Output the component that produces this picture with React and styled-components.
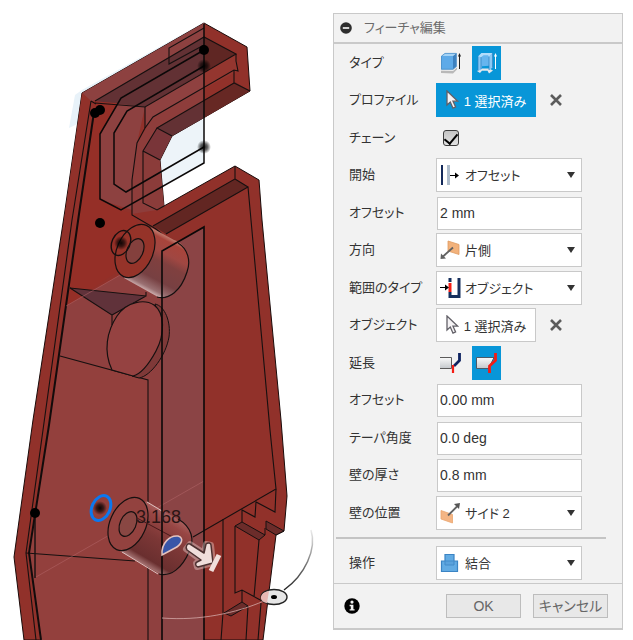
import { useId, useState } from "react";
import styled, { createGlobalStyle } from "styled-components";

export default function App() {
  const [type, setType] = useState("thin");
  const [extend, setExtend] = useState("adjacent");
  const [chain, setChain] = useState(true);

  return (
    <>
      <GlobalStyle />
      <Workspace>
        <Viewport>
          <Model />
        </Viewport>

        <Panel onSubmit={(e) => e.preventDefault()}>
          <PanelHeader>
            <CollapseButton type="button" aria-label="折りたたむ">
              <MinusIcon />
            </CollapseButton>
            <Title>フィーチャ編集</Title>
          </PanelHeader>

          <PanelBody>
            <Rows>
              <Row>
                <Label as="span">タイプ</Label>
                <IconToggle
                  type="button"
                  aria-label="押し出し"
                  $active={type === "solid"}
                  onClick={() => setType("solid")}
                >
                  <SolidIcon />
                </IconToggle>
                <IconToggle
                  type="button"
                  aria-label="薄い押し出し"
                  $active={type === "thin"}
                  onClick={() => setType("thin")}
                >
                  <ThinIcon />
                </IconToggle>
              </Row>
              <SelectionRow label="プロファイル" active />
              <Row>
                <Label htmlFor="chain">チェーン</Label>
                <Checkbox
                  id="chain"
                  type="checkbox"
                  checked={chain}
                  onChange={(e) => setChain(e.target.checked)}
                />
              </Row>
              <SelectRow
                label="開始"
                icon={<StartIcon />}
                options={["オフセット", "プロファイル平面", "オブジェクト"]}
              />
              <InputRow label="オフセット" value="2 mm" />
              <SelectRow
                label="方向"
                icon={<DirectionIcon />}
                options={["片側", "2 つの側面", "対称"]}
              />
              <SelectRow
                label="範囲のタイプ"
                icon={<ExtentIcon />}
                options={["オブジェクト", "距離", "すべて"]}
              />
              <SelectionRow label="オブジェクト" />
              <Row>
                <Label as="span">延長</Label>
                <IconToggle
                  type="button"
                  aria-label="選択した面"
                  $active={extend === "face"}
                  onClick={() => setExtend("face")}
                >
                  <FaceIcon />
                </IconToggle>
                <IconToggle
                  type="button"
                  aria-label="隣接する面"
                  $active={extend === "adjacent"}
                  onClick={() => setExtend("adjacent")}
                >
                  <AdjacentIcon />
                </IconToggle>
              </Row>
              <InputRow label="オフセット" value="0.00 mm" />
              <InputRow label="テーパ角度" value="0.0 deg" />
              <InputRow label="壁の厚さ" value="0.8 mm" />
              <SelectRow
                label="壁の位置"
                icon={<SideIcon />}
                options={["サイド 2", "サイド 1", "中心"]}
              />
            </Rows>
            <Divider />
            <SelectRow
              label="操作"
              icon={<JoinIcon />}
              options={["結合", "切り取り", "交差"]}
            />
          </PanelBody>

          <PanelFooter>
            <InfoButton type="button" aria-label="情報">
              <InfoIcon />
            </InfoButton>
            <FooterButton type="submit">OK</FooterButton>
            <FooterButton type="button">キャンセル</FooterButton>
          </PanelFooter>
        </Panel>
      </Workspace>
    </>
  );
}

function InputRow({ label, value }) {
  const id = useId();
  return (
    <Row>
      <Label htmlFor={id}>{label}</Label>
      <TextInput id={id} defaultValue={value} />
    </Row>
  );
}

function SelectRow({ label, icon, options }) {
  const id = useId();
  return (
    <Row>
      <Label htmlFor={id}>{label}</Label>
      <SelectBox>
        {icon}
        <Select id={id}>
          {options.map((option) => (
            <option key={option}>{option}</option>
          ))}
        </Select>
        <svg width="8" height="6" viewBox="0 0 8 6">
          <path d="M0 0H8L4 6Z" fill="#333" />
        </svg>
      </SelectBox>
    </Row>
  );
}

function SelectionRow({ label, active }) {
  return (
    <Row>
      <Label as="span">{label}</Label>
      <SelectionButton type="button" $active={active}>
        <CursorIcon />1 選択済み
      </SelectionButton>
      <ClearButton type="button" aria-label="選択を解除">
        <svg width="12" height="12" viewBox="0 0 12 12">
          <path d="M1 1L11 11M11 1L1 11" stroke="#5c5c5c" strokeWidth="2.6" />
        </svg>
      </ClearButton>
    </Row>
  );
}

/* Icons */

const MinusIcon = () => (
  <svg width="12" height="12" viewBox="0 0 12 12">
    <circle cx="6" cy="6" r="5.8" fill="#2e2e2e" />
    <path d="M2.8 6H9.2" stroke="#e8e8e8" strokeWidth="1.8" />
  </svg>
);

const InfoIcon = () => (
  <svg width="16" height="16" viewBox="0 0 16 16">
    <circle cx="8" cy="8" r="7.7" fill="#000" />
    <circle cx="8" cy="4.1" r="1.6" fill="#f1f1f1" />
    <path d="M5.6 6.8H9.4V11.2H10.6V12.6H5.6V11.2H6.8V8.2H5.6Z" fill="#f1f1f1" />
  </svg>
);

const SolidIcon = () => (
  <svg width="20" height="22" viewBox="0 0 20 22">
    <path d="M0 18.5L12 19L16 15.5V17.5L12 21.5L0 21Z" fill="#b9b9b9" />
    <path d="M0 18.5H12L16 15.5V14H0Z" fill="#e9e9e9" />
    <path d="M0 4L4 1H15L12 4Z" fill="#a5d3f5" />
    <path d="M0 4H12V17.5H0Z" fill="#5eaae8" />
    <path d="M12 4L15.5 1V14.5L12 17.5Z" fill="#3c80bf" />
    <path d="M.5 4.2V17.2H12L15.3 14.4V1.4H4Z" fill="none" stroke="#4b8fc8" strokeWidth=".8" />
    <path d="M18.5 17V2" stroke="#222" />
    <path d="M17 4.5L18.5 1L20 4.5Z" fill="#222" />
  </svg>
);

const ThinIcon = () => (
  <svg width="20" height="22" viewBox="0 0 20 22">
    <path d="M0 19L4 16.5H12L16 18.5L12 21.5L10.5 18.8H5L3 21Z" fill="#e4e8ec" />
    <path d="M1 4.5L4.5 1H15.5V15.5L12 18V13.8L5 14.2V17L1 18.5Z" fill="#66b5ee" />
    <path d="M1 4.5L4.5 1H15.5L12 4.8L11 3.3H6.5L4 5.2Z" fill="#b1dcfb" />
    <path d="M1 4.5L4 5.2V18L1 18.5Z" fill="#85c6f5" />
    <path d="M12 4.8L15.5 1V15.5L12 18Z" fill="#8bc8f4" />
    <path d="M4 5.2V17M12 4.8V18M1 4.5V18.5M15.5 1V15.5" stroke="#2d80bd" strokeWidth=".7" />
    <path d="M18.5 17V2" stroke="#fff" />
    <path d="M17 4.5L18.5 1L20 4.5Z" fill="#fff" />
  </svg>
);

const CursorIcon = () => (
  <svg width="13" height="20" viewBox="0 0 13 20">
    <path
      d="M1 1V15L4.3 12L7 18.2L9.6 17L7 11.2H11.8Z"
      fill="#f5f3f5"
      stroke="#626067"
      strokeWidth="1.3"
    />
  </svg>
);

const StartIcon = () => (
  <svg width="20" height="22" viewBox="0 0 20 22">
    <path d="M2 1V21" stroke="#13295a" strokeWidth="2" />
    <path d="M8.5 1V21" stroke="#aebccb" strokeWidth="3" />
    <path d="M10 11.5H17" stroke="#000" />
    <path d="M15 8.5L19 11.5L15 14.5Z" fill="#000" />
  </svg>
);

const DirectionIcon = () => (
  <svg width="20" height="22" viewBox="0 0 20 22">
    <path d="M8 2L19 5.5V15.5L8 12Z" fill="#f2b27c" stroke="#e09a60" strokeWidth=".8" />
    <path d="M13 8.5L3 17.5" stroke="#626262" strokeWidth="1.8" />
    <path d="M.5 20L1 14.5L6 19.5Z" fill="#626262" />
  </svg>
);

const ExtentIcon = () => (
  <svg width="21" height="22" viewBox="0 0 21 22">
    <path d="M10 1V5M10 15V19.5H19V1" fill="none" stroke="#17305e" strokeWidth="3" />
    <path d="M10 6V15" stroke="#f51c14" strokeWidth="3" />
    <path d="M0 10.5H7" stroke="#000" />
    <path d="M5 7.5L9 10.5L5 13.5Z" fill="#000" />
  </svg>
);

const SideIcon = () => (
  <svg width="20" height="22" viewBox="0 0 20 22">
    <path d="M1 8.5L12.5 12.5V21L1 17Z" fill="#f4b584" stroke="#eba66e" strokeWidth=".8" />
    <path d="M8 13.5L17 4.5" stroke="#626262" strokeWidth="1.8" />
    <path d="M20 1L19 7L14 2Z" fill="#555" />
  </svg>
);

const JoinIcon = () => (
  <svg width="20" height="22" viewBox="0 0 20 22">
    <path
      d="M5 2.5H14V9H17.5V19.5H1.5V9H5Z"
      fill="#62abe3"
      stroke="#3b84c4"
      strokeWidth="1.2"
    />
    <path d="M5 9V13H14V9Z" fill="#5aa2dc" stroke="#438bc9" strokeWidth="1" />
  </svg>
);

const FaceIcon = () => (
  <svg width="22" height="22" viewBox="0 0 22 22">
    <path d="M0 5.5H11.5V16.5H0Z" fill="url(#metal)" />
    <path d="M0 5.5H11.5V16.5H0" fill="none" stroke="#5b5b5b" />
    <path d="M19.5 1V8.5L14 14" fill="none" stroke="#0d2260" strokeWidth="2.8" />
    <path d="M13 13V21" stroke="#f51c14" strokeWidth="2.2" />
  </svg>
);

const AdjacentIcon = () => (
  <svg width="22" height="22" viewBox="0 0 22 22">
    <path d="M.5 5.5H18L12.5 16.5H.5Z" fill="url(#metal)" stroke="#4d5a66" />
    <path d="M19.5 1V8.5L13.5 14V21" fill="none" stroke="#f51c14" strokeWidth="2.8" />
  </svg>
);

/* 3D model shown in the viewport */

function Model() {
  return (
    <svg viewBox="0 0 333 640" role="img" aria-label="モデル">
      <defs>
        <linearGradient id="metal" x1="0" y1="0" x2="0" y2="1">
          <stop offset="0" stopColor="#fafafa" />
          <stop offset="1" stopColor="#c4c8cc" />
        </linearGradient>
        <linearGradient id="boss" gradientUnits="userSpaceOnUse" x1="170" y1="236" x2="142" y2="289">
          <stop offset="0" stopColor="#c78f80" />
          <stop offset=".1" stopColor="#a8443b" />
          <stop offset=".3" stopColor="#a04742" />
          <stop offset=".45" stopColor="#80403f" />
          <stop offset=".75" stopColor="#774042" />
          <stop offset=".92" stopColor="#9a7072" />
          <stop offset="1" stopColor="#d3b5b5" />
        </linearGradient>
        <linearGradient id="bossLow" gradientUnits="userSpaceOnUse" x1="170" y1="510" x2="138" y2="564">
          <stop offset="0" stopColor="#b06a68" />
          <stop offset=".2" stopColor="#984644" />
          <stop offset=".5" stopColor="#7c3736" />
          <stop offset=".85" stopColor="#6a2f2f" />
          <stop offset="1" stopColor="#b98a89" />
        </linearGradient>
        <linearGradient id="orbit" gradientUnits="userSpaceOnUse" x1="313" y1="530" x2="284" y2="590">
          <stop offset="0" stopColor="#eee" />
          <stop offset=".5" stopColor="#777" />
          <stop offset="1" stopColor="#222" />
        </linearGradient>
        <radialGradient id="softDot">
          <stop offset="0" stopColor="#000" stopOpacity=".9" />
          <stop offset=".5" stopColor="#000" stopOpacity=".6" />
          <stop offset="1" stopColor="#000" stopOpacity="0" />
        </radialGradient>
      </defs>

      {/* sketch plane behind the body */}
      <path d="M204 22L82 90L75 95L69 128L90 118L204 60Z" fill="#e8f2f9" />
      <path d="M150 120H204V163L150 194Z" fill="#edf4f9" />

      {/* body */}
      <path
        d="M204 23L247 47L250 91L172 136L160 160L164 206L235 166L259 180L262 220L281 420L287 496L284 531L276 535L263 640H24L14 557L33 420L65 210L82 93Z"
        fill="#91312a"
        stroke="#1a0b0a"
      />

      <g stroke="none">
        <path d="M204 23V64L145 107L137 143L132 210L100 200V134L120 98L91 101L82 93Z" fill="#8d4140" />
        <path d="M95 101L204 37V72L145 107Z" fill="#623134" />
        <path d="M204 37L236 54L204 72Z" fill="#5f2623" />
        <path d="M82 93L91 101L95 101L74 220H64Z" fill="#91312a" />
        <path d="M95 102L118 103L100 135V198L121 210L133 214L150 250L66 306Z" fill="#952f27" />
        <path d="M145 107L204 72V94L153 117L145 128Z" fill="#8f4140" />
        <path d="M204 72L236 54L238 71L204 89Z" fill="#94362f" />
        <path d="M153 117L204 88V101L157 128L143 151V203L157 210L132 214V180L137 143Z" fill="#8e3d3b" />
        <path d="M157 128L204 101V118L172 136Z" fill="#633134" />
        <path d="M204 101L235 82L250 91L204 118Z" fill="#672824" />
        <path d="M157 128L172 136L160 160L143 151Z" fill="#793539" />
        <path d="M143 151L160 160L164 206L157 210L143 203Z" fill="#8b3c3a" />
        <path d="M153 226L235 179L248 187L166 234Z" fill="#622622" />
        <path d="M66 306L162 251L204 227V640H40L28 553L49 420Z" fill="#8f403f" />
        <path d="M162 251L204 227V640H162Z" fill="#89474a" opacity=".55" />
        <path d="M70 288L146 296L112 315Z" fill="#60323a" />
        <path d="M60 356L148 380V640H40L28 553Z" fill="#93403d" opacity=".8" />
      </g>

      <g fill="none" stroke="#161010" strokeWidth="1.1">
        <path d="M204 28L169 48V64L204 45" />
        <path d="M95 101L204 37L236 54L145 107L95 103" />
        <path d="M236 54V61L238 71L234 70L153 117L145 128L137 143L132 180V215L156 229L162 234" />
        <path d="M145 107V128M234 70V83L250 91M234 83L157 128L172 136M157 128L143 151L160 160M143 151V203L157 210L164 206" />
        <path d="M235 166V179L153 226M235 179L248 187L166 234M248 187L251 220L270 430L276 489L193 537" />
        <path d="M91 101L72 220L43 430L26 553L36 640M91 101L96 104" />
        <path d="M70 288L146 296V292M70 288L112 315V325M112 315L146 296" />
        <path d="M60 356L148 380V640M26 553L135 561" />
        <path d="M276 489L275 512L256 502L255 517L242 510V522" />
        <path d="M223 519V613L221 640M235 526V593L242 590L264 602M242 590V602M259 540L254 597M248 606L246 640M261 603L258 640" />
      </g>
      <path d="M94 112L79 214L49 425L29 553L41 640" fill="none" stroke="#120b0b" strokeWidth="2" />
      <path d="M35 513V578" stroke="#161010" strokeWidth="1.4" />

      {/* notches at the lower right */}
      <g fill="#6b2c2a" stroke="#161010">
        <path d="M235 526L242 522L265 535L259 540Z" />
        <path d="M266 521L284 531L276 535L266 529Z" />
        <path d="M224 613L242 602L248 606L231 616Z" />
        <path d="M265 535V528" />
      </g>
      <path d="M66 306L162 251M36 577L204 481" stroke="#b7696c" opacity=".5" />

      {/* profile sketch */}
      <g fill="none" stroke="#0b0808" strokeWidth="1.5">
        <path d="M204 24V163L121 210L100 199V134L121 98L204 50" />
        <path d="M204 66L127 111L114 133V184L126 192L204 147" />
      </g>

      {/* upper boss */}
      <path
        d="M150 227L174 240C187 244 191 260 188 270C183 290 170 299 158 297L124 278Z"
        fill="url(#boss)"
      />
      <path
        d="M178 243C188 249 191 261 187 272C181 291 169 300 157 297"
        fill="none"
        stroke="#161010"
        strokeWidth="1.2"
      />
      <ellipse cx="135" cy="251" rx="18" ry="28" transform="rotate(24 135 251)" fill="#953329" stroke="#161010" strokeWidth="1.2" />
      <ellipse cx="135" cy="251" rx="8" ry="13" transform="rotate(24 135 251)" fill="#84403d" stroke="#161010" strokeWidth="1.2" />
      <ellipse cx="121" cy="243" rx="9" ry="13" transform="rotate(24 121 243)" fill="none" stroke="#161010" strokeWidth="1.4" />

      {/* recess */}
      <path
        d="M155 304C165 306 171 322 169 337C166 355 151 376 139 378L132 376C160 357 166 332 155 304Z"
        fill="#7f3938"
        stroke="#161010"
      />
      <path
        d="M112 370C103 351 107 331 117 316C127 301 145 299 154 305C165 313 165 334 156 351C149 364 141 374 133 376Z"
        fill="#954241"
        stroke="#161010"
        strokeWidth="1.2"
      />

      {/* lower boss */}
      <path
        d="M146 501L174 517C190 524 195 538 190 550C183 568 171 576 160 574L118 550Z"
        fill="url(#bossLow)"
      />
      <path d="M122 552L158 574M147 502L162 511" stroke="#dcc0bf" />
      <path
        d="M178 519C192 527 195 540 189 552C182 568 171 577 159 574"
        fill="none"
        stroke="#161010"
        strokeWidth="1.2"
      />
      <ellipse cx="128" cy="524" rx="18" ry="28" transform="rotate(24 128 524)" fill="#93423f" stroke="#161010" strokeWidth="1.2" />
      <ellipse cx="128" cy="524" rx="8" ry="13" transform="rotate(24 128 524)" fill="#894743" stroke="#161010" strokeWidth="1.2" />
      <path d="M137 518L182 542" stroke="#48191a" />
      <path d="M162 640V251L204 227V640" fill="none" stroke="#0b0808" strokeWidth="1.6" />

      {/* sketch points */}
      <circle cx="204" cy="50" r="5" />
      <circle cx="95" cy="113" r="5" />
      <circle cx="100" cy="110" r="5" />
      <circle cx="100" cy="223" r="5" />
      <circle cx="35" cy="513" r="5" />
      <circle cx="204" cy="66" r="7" fill="url(#softDot)" />
      <circle cx="204" cy="147" r="7" fill="url(#softDot)" />
      <circle cx="121" cy="243" r="7" fill="url(#softDot)" />
      <circle cx="100" cy="508" r="7" fill="url(#softDot)" />
      <ellipse cx="101" cy="508" rx="9" ry="13" transform="rotate(25 101 508)" fill="none" stroke="#0b78f0" strokeWidth="3" />

      <Dimension x="136" y="523">3.168</Dimension>
      <path
        d="M162 555C161 543 170 535 178 536C185 538 181 545 175 548Z"
        fill="#3856a8"
        stroke="#e4c3bf"
        strokeWidth="1.5"
      />

      {/* drag arrow, with a pale glow under it */}
      <path
        d="M190 544L204 553L206 544L211 545L213 563L197 567L196 563L201 560L186 549Z"
        fill="none"
        stroke="#f3dedb"
        strokeWidth="6"
        strokeLinejoin="round"
        opacity=".4"
      />
      <path
        d="M190 544L204 553L206 544C208 542 211 543 211 545L213 563L198 567C195 566 195 563 197 562L201 560L187 550C185 547 187 543 190 544Z"
        fill="#f0dedb"
        stroke="#4c3030"
        strokeWidth="1.5"
        strokeLinejoin="round"
      />
      <path d="M219 555L211 571" stroke="#f0dedb" strokeWidth="5" />

      {/* rotation handle */}
      <path d="M311 530C317 549 305 575 284 590" fill="none" stroke="url(#orbit)" strokeWidth="1.5" />
      <path d="M264 601C236 613 200 621 162 618" fill="none" stroke="#d3a9a7" opacity=".8" />
      <ellipse cx="274" cy="597" rx="13" ry="7.5" fill="#e6e6e6" stroke="#222" strokeWidth="1.4" />
      <path d="M269 591C258 593 259 602 267 603Z" fill="#e7b7b3" />
      <ellipse cx="274" cy="597" rx="3" ry="2" />
    </svg>
  );
}

const GlobalStyle = createGlobalStyle`
  * {
    box-sizing: border-box;
  }
  body {
    margin: 0;
    background: #fff;
    color: #333;
    font-family: "Liberation Sans", "Noto Sans CJK JP", sans-serif;
    font-size: 13px;
    font-feature-settings: "palt";
  }
  button, input, select {
    font: inherit;
    font-feature-settings: inherit;
    color: inherit;
  }
  svg {
    display: block;
    flex: none;
  }
`;

const Workspace = styled.main`
  display: grid;
  grid-template-columns: minmax(0, 1fr) 290px;
  align-items: start;
  padding-right: 10px;
`;

const Viewport = styled.section`
  svg {
    width: 100%;
    height: auto;
  }
`;

const Dimension = styled.text`
  font-size: 18px;
  fill: #2b1515;
`;

const Panel = styled.form`
  margin-top: 13px;
  border: 1px solid #c9c9c9;
  border-bottom-width: 2px;
  background: #f2f2f2;
`;

const PanelHeader = styled.header`
  display: flex;
  align-items: center;
  gap: 12px;
  height: 30px;
  padding-left: 6px;
  border-bottom: 2px solid #c9c9c9;
`;

const Title = styled.h1`
  margin: 0;
  font-size: 13px;
  font-weight: 400;
  line-height: 20px;
  color: #6b6b6b;
`;

const PlainButton = styled.button`
  display: flex;
  align-items: center;
  justify-content: center;
  padding: 0;
  border: none;
  background: none;
  cursor: pointer;
`;

const CollapseButton = styled(PlainButton)``;

const PanelBody = styled.div`
  padding-bottom: 1px;
`;

const Rows = styled.div`
  display: grid;
  grid-auto-rows: 37px 38px;
`;

const Row = styled.div`
  display: flex;
  align-items: center;
  height: 38px;
  padding-left: 15px;
`;

const Label = styled.label`
  flex: none;
  width: 87px;
  line-height: 20px;
`;

const Divider = styled.hr`
  height: 2px;
  margin: 6px 16px 5px 2px;
  border: none;
  background: #c4c4c4;
`;

const IconToggle = styled(PlainButton)`
  width: 29px;
  height: 34px;
  background: ${({ $active }) => ($active ? "#0896d8" : "transparent")};

  & + & {
    margin-left: 7px;
  }
`;

const SelectionButton = styled(PlainButton)`
  gap: 5px;
  width: 100px;
  height: 34px;
  border: 1px solid ${({ $active }) => ($active ? "#0896d8" : "#c9c9c9")};
  background: ${({ $active }) => ($active ? "#0896d8" : "#fff")};
  color: ${({ $active }) => ($active ? "#fff" : "#333")};
  white-space: nowrap;
`;

const ClearButton = styled(PlainButton)`
  margin-left: 14px;
`;

const Checkbox = styled.input`
  appearance: none;
  width: 16px;
  height: 16px;
  margin: 0 0 0 7px;
  border: 1px solid #3c3c3c;
  border-radius: 3px;
  background: linear-gradient(#c4c4c4, #e2e2e2);

  &:checked::after {
    content: "";
    display: block;
    width: 6px;
    height: 11px;
    margin: 0 auto;
    border: solid #000;
    border-width: 0 2px 2px 0;
    transform: rotate(40deg);
  }
`;

const TextInput = styled.input`
  width: 145px;
  height: 33px;
  margin-left: 1px;
  padding: 0 2px;
  border: 1px solid #c9c9c9;
  background: #fff;
  font-size: 14px;
`;

// icon, select and arrow share one row; the select spans all of it
const SelectBox = styled.div`
  display: grid;
  grid-template-columns: 26px 1fr 14px;
  align-items: center;
  width: 146px;
  height: 34px;
  padding-left: 3px;
  border: 1px solid #c9c9c9;
  background: #fff;

  > * {
    grid-row: 1;
  }
  > svg {
    z-index: 1;
    pointer-events: none;
  }
  > svg:first-child {
    grid-column: 1;
  }
  > svg:last-child {
    grid-column: 3;
  }
`;

const Select = styled.select`
  grid-column: 1 / -1;
  appearance: none;
  width: 100%;
  height: 100%;
  padding: 0 14px 0 25px;
  border: none;
  background: transparent;
`;

const PanelFooter = styled.footer`
  display: flex;
  align-items: center;
  gap: 12px;
  height: 45px;
  padding: 0 14px 0 10px;
  border-top: 1px solid #c9c9c9;
`;

const InfoButton = styled(PlainButton)`
  margin-right: auto;
`;

const FooterButton = styled.button`
  width: 75px;
  height: 24px;
  padding: 0;
  border: 1px solid #bdbdbd;
  background: #e8e8e8;
  color: #666;
  font-size: 14px;
  line-height: 20px;
  cursor: pointer;
`;
